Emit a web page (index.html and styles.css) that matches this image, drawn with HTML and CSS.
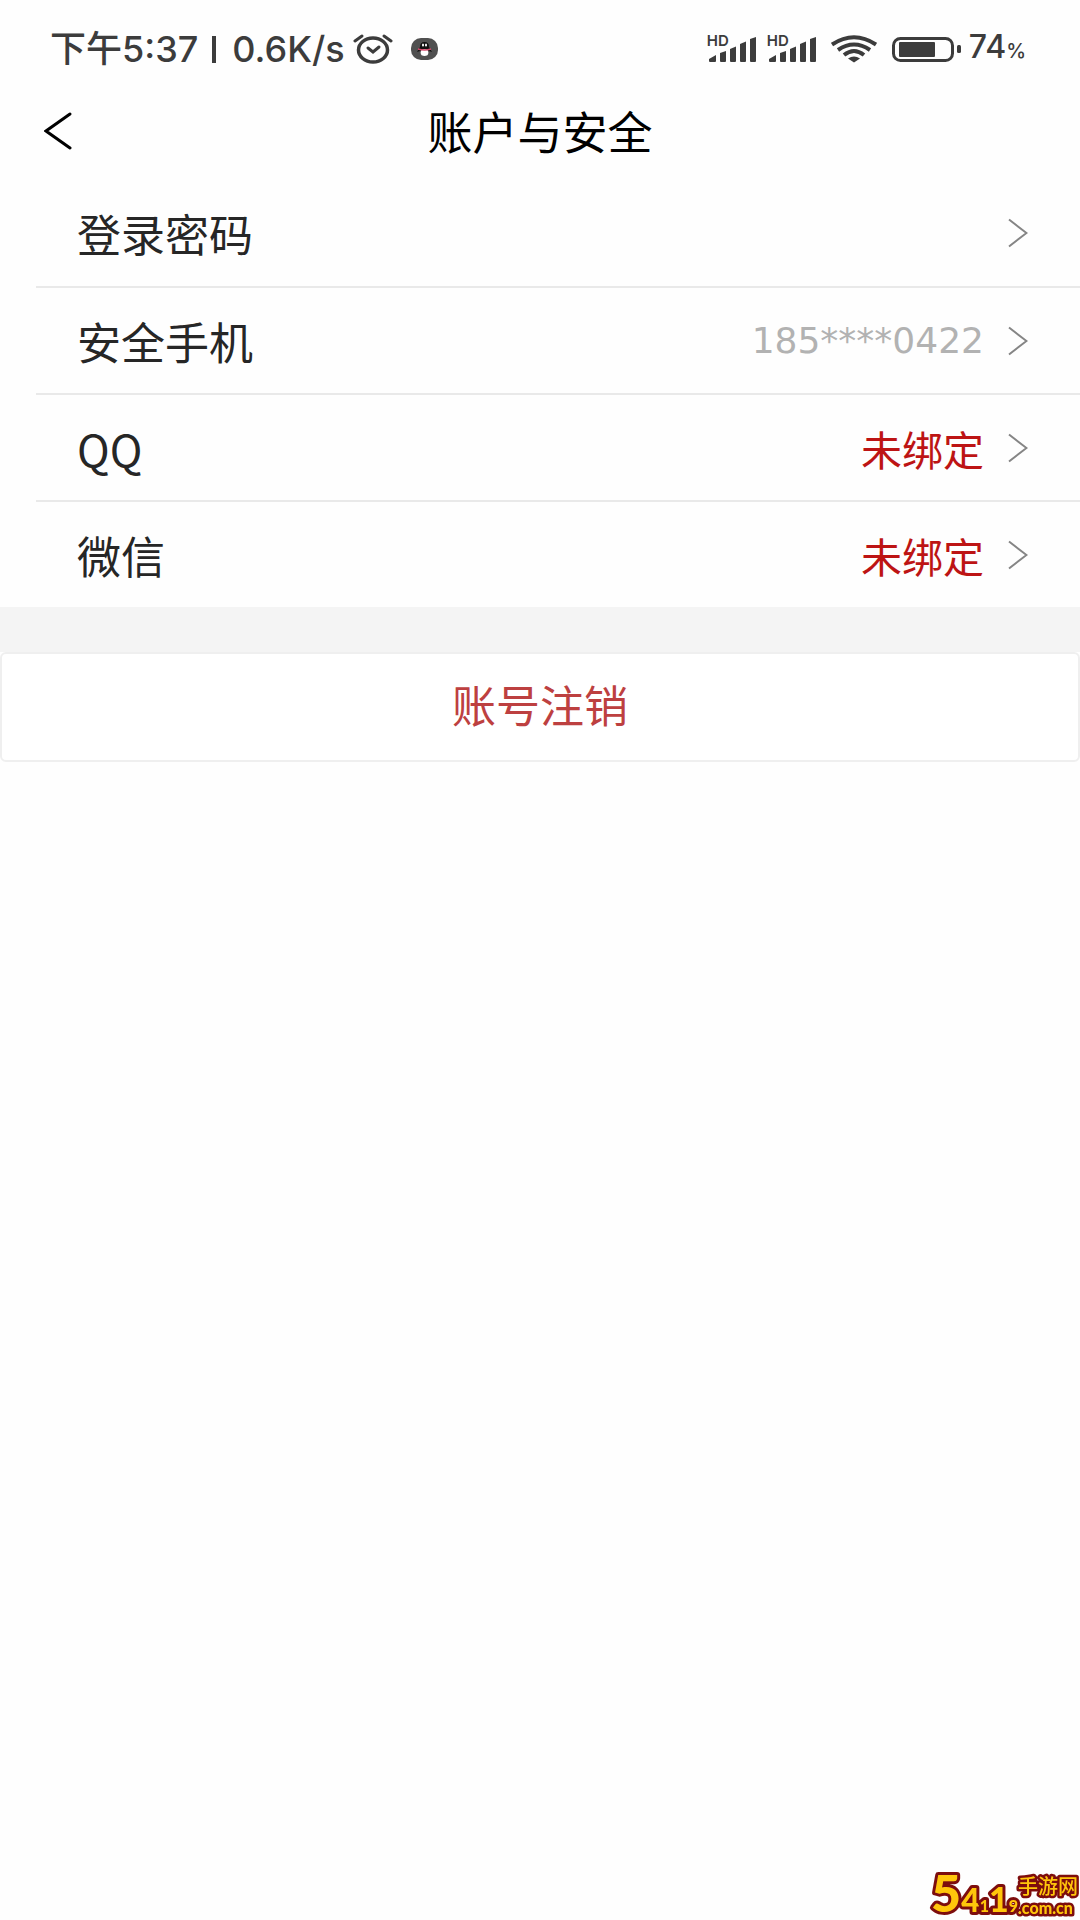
FILE: index.html
```html
<!DOCTYPE html>
<html lang="zh-CN">
<head>
<meta charset="utf-8">
<meta name="viewport" content="width=device-width, initial-scale=1">
<title>账户与安全</title>
<link rel="stylesheet" href="styles.css">
</head>
<body>
<svg class="defs" aria-hidden="true">
  <symbol id="chevron" viewBox="0 0 20 30"><path d="M1 1.500L18.500 15L1 28.500" fill="none" stroke="#858585" stroke-width="2"/></symbol>
  <symbol id="bars" viewBox="0 0 50 28">
    <g fill="#3c3c3c">
      <path d="M2 26V24L9 20V26Q9 27 8 27H3Q2 27 2 26Z"/>
      <path d="M13 18L19 16V26Q19 27 18 27H14Q13 27 13 26Z"/>
      <path d="M23 14L29 11.500V26Q29 27 28 27H24Q23 27 23 26Z"/>
      <path d="M33 9L39 6.500V26Q39 27 38 27H34Q33 27 33 26Z"/>
      <path d="M43 4L49 2V26Q49 27 48 27H44Q43 27 43 26Z"/>
    </g>
  </symbol>
</svg>

<header class="status">
  <div class="status-left">
    <span class="clock">下午5:37</span>
    <span class="bar"></span>
    <span class="speed">0.6K/s</span>
    <svg class="alarm" viewBox="0 0 40 30" aria-hidden="true">
      <g fill="none" stroke="#3c3c3c" stroke-linecap="round">
        <ellipse cx="20" cy="16" rx="14.500" ry="12" stroke-width="3.500"/>
        <path d="M2 7L9 2M38 7L31 2" stroke-width="3"/>
        <path d="M15 14L20 18L26 13" stroke-width="3"/>
      </g>
    </svg>
    <svg class="qq" viewBox="0 0 27 22" aria-hidden="true">
      <rect width="27" height="22" rx="10" fill="#505050"/>
      <path d="M9 9Q9 4 13.500 4T18 9L21 14L18 13Q18 18 13.500 18T9 13L6 14Z" fill="#111"/>
      <ellipse cx="13.500" cy="14.500" rx="4" ry="3.500" fill="#fff"/>
      <ellipse cx="12" cy="7" rx="1" ry="1.500" fill="#fff"/><ellipse cx="15" cy="7" rx="1" ry="1.500" fill="#fff"/>
      <path d="M7 11Q13.500 13 20 11" fill="none" stroke="#d5486a" stroke-width="1.500"/>
    </svg>
  </div>
  <div class="status-right">
    <span class="signal"><svg aria-hidden="true"><use href="#bars"/></svg><span class="hd">HD</span></span>
    <span class="signal"><svg aria-hidden="true"><use href="#bars"/></svg><span class="hd">HD</span></span>
    <svg class="wifi" viewBox="0 0 46 28" aria-hidden="true">
      <g fill="none" stroke="#3c3c3c" stroke-width="4">
        <path d="M1 9.500Q23 -5 45 9.500"/><path d="M7 15Q23 4 39 15"/><path d="M13 20Q23 12 33 20"/>
      </g>
      <path d="M17 23.500Q23 19.500 29 23.500L23 27.500Z" fill="#3c3c3c"/>
    </svg>
    <svg class="battery" viewBox="0 0 69 26" aria-hidden="true">
      <rect x="1.500" y="2.500" width="59" height="22" rx="7" fill="none" stroke="#3c3c3c" stroke-width="3"/>
      <rect x="7" y="6" width="36" height="15" rx="1" fill="#3c3c3c"/>
      <rect x="65" y="9" width="4" height="8" rx="1.500" fill="#3c3c3c"/>
    </svg>
    <span class="level">74<small>%</small></span>
  </div>
</header>

<nav class="nav">
  <button class="back" type="button" aria-label="返回">
    <svg viewBox="0 0 28 38" aria-hidden="true"><path d="M26 2L2 19L26 36" fill="none" stroke="#000" stroke-width="3" stroke-linecap="round"/></svg>
  </button>
  <h1>账户与安全</h1>
</nav>

<main>
  <ul class="list">
    <li><a class="row" href="#password"><span>登录密码</span><svg class="chevron" aria-hidden="true"><use href="#chevron"/></svg></a></li>
    <li><a class="row" href="#phone"><span>安全手机</span><span class="value phone">185****0422</span><svg class="chevron" aria-hidden="true"><use href="#chevron"/></svg></a></li>
    <li><a class="row" href="#qq"><span>QQ</span><span class="value unbound">未绑定</span><svg class="chevron" aria-hidden="true"><use href="#chevron"/></svg></a></li>
    <li><a class="row" href="#wechat"><span>微信</span><span class="value unbound">未绑定</span><svg class="chevron" aria-hidden="true"><use href="#chevron"/></svg></a></li>
  </ul>
  <div class="gap"></div>
  <button class="cancel" type="button">账号注销</button>
</main>

<svg class="watermark" viewBox="0 0 152 56" role="img" aria-label="54119手游网 .com.cn">
  <g class="logo-text">
    <text class="logo-digits" x="3" y="48"><tspan font-size="52">5</tspan><tspan font-size="32">4</tspan><tspan font-size="16">1</tspan><tspan font-size="34">1</tspan><tspan font-size="16">9</tspan></text>
    <text class="logo-name" x="90" y="30">手游网</text>
    <text class="logo-domain" x="90" y="50">.com.cn</text>
  </g>
</svg>
</body>
</html>
```
FILE: styles.css
```css
* {
  box-sizing: border-box;
}

body {
  margin: 0;
  min-height: 100vh;
  background: #fefefe;
  color: #262626;
  font-family: "Noto Sans CJK SC", sans-serif;
}

button {
  border: 0;
  padding: 0;
  background: none;
  font: inherit;
}

.defs {
  position: absolute;
  width: 0;
  height: 0;
}

.status {
  display: flex;
  justify-content: space-between;
  align-items: center;
  height: 98px;
  padding: 0 54px 0 50px;
  color: #3c3c3c;
  font-family: Inter, "Noto Sans CJK SC", sans-serif;
  font-size: 36px;
  font-weight: 500;
  line-height: 40px;
}

.status-left,
.status-right {
  display: flex;
  align-items: center;
}

.bar {
  width: 4px;
  height: 27px;
  margin: 0 16px 0 14px;
  background: #3c3c3c;
}

.alarm {
  width: 40px;
  height: 30px;
  margin-left: 8px;
}

.qq {
  width: 27px;
  height: 22px;
  margin-left: 18px;
}

.signal {
  position: relative;
  width: 50px;
  height: 28px;
  margin-right: 10px;
}

.signal svg {
  display: block;
  width: 50px;
  height: 28px;
}

.hd {
  position: absolute;
  top: 0;
  left: 0;
  font-size: 15px;
  font-weight: 600;
  line-height: 12px;
}

.wifi {
  width: 46px;
  height: 28px;
  margin: 0 15px 0 4px;
}

.battery {
  width: 69px;
  height: 26px;
  margin-right: 8px;
}

.level {
  font-size: 32px;
}

.level small {
  font-size: 20px;
}

.nav {
  display: grid;
  grid-template-columns: 1fr auto 1fr;
  align-items: center;
  height: 81px;
  padding: 0 44px 15px;
}

.nav h1 {
  margin: 0;
  color: #000;
  font-size: 45px;
  font-weight: 400;
  line-height: 64px;
}

.back {
  justify-self: start;
}

.back svg {
  display: block;
  width: 28px;
  height: 38px;
}

.list {
  margin: 0;
  padding: 0 0 0 36px;
  list-style: none;
}

.row {
  display: flex;
  align-items: center;
  height: 107px;
  padding: 0 52px 0 41px;
  color: inherit;
  font-size: 44px;
  text-decoration: none;
}

.list li + li .row {
  border-top: 2px solid #e9e9e9;
}

.value {
  margin-left: auto;
  color: #b2b2b2;
  font-size: 41px;
}

.phone {
  font-family: "DejaVu Sans", sans-serif;
  font-size: 36px;
}

.unbound {
  color: #bd1414;
}

.chevron {
  width: 20px;
  height: 30px;
  margin-left: 24px;
}

.row > span:first-child + .chevron {
  margin-left: auto;
}

.gap {
  height: 45px;
  background: #f4f4f4;
}

.cancel {
  display: block;
  width: 100%;
  height: 110px;
  padding-bottom: 6px;
  border: 2px solid #efefef;
  border-radius: 6px;
  background: #fff;
  color: #bd4040;
  font-size: 44px;
}

.watermark {
  position: fixed;
  right: 0;
  bottom: 0;
  width: 152px;
  height: 56px;
}

.logo-text {
  fill: #ffc60b;
  stroke: #7d0d0d;
  stroke-width: 6px;
  stroke-linejoin: round;
  paint-order: stroke;
  font-family: Lato, sans-serif;
  font-weight: 900;
}

.logo-name {
  font-family: "Noto Sans CJK SC", sans-serif;
  font-size: 20px;
  font-weight: 500;
  stroke-width: 5px;
}

.logo-domain {
  font-size: 16px;
  stroke-width: 5px;
}
```
